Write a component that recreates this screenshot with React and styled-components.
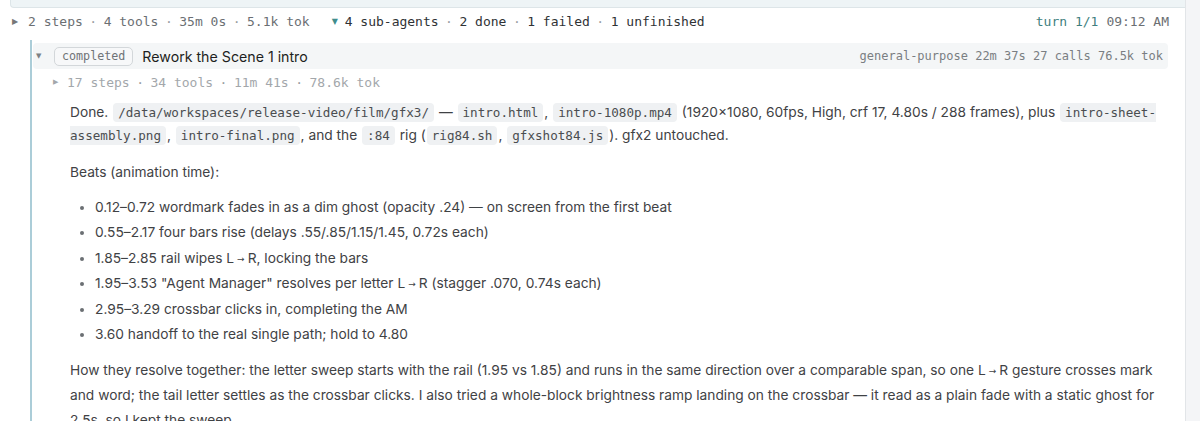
import React from "react";
import styled, { createGlobalStyle } from "styled-components";

const Global = createGlobalStyle`
  html, body { margin: 0; padding: 0; background: #ffffff; }
  body { font-family: Inter, "Noto Sans", sans-serif; }
  * { box-sizing: border-box; }
`;

const MONO = `"DejaVu Sans Mono", "Liberation Mono", monospace`;
const SANS = `Inter, "Noto Sans", sans-serif`;

const Page = styled.div`
  display: flex;
  width: 1200px;
  height: 421px;
  overflow: hidden;
`;

const Main = styled.div`
  flex: 1;
  min-width: 0;
  display: flex;
  flex-direction: column;
  & > * { flex: none; }
`;

const Sidebar = styled.div`
  width: 15px;
  flex: none;
  background: #f4f5f7;
  border-left: 1px solid #e2e5e8;
`;

const TopStrip = styled.div`
  height: 8px;
  margin-left: 10px;
  background: #eef4f6;
  border-bottom: 1px solid #dde5e8;
  border-left: 1px solid #dde5e8;
  border-bottom-left-radius: 4px;
`;

const MetaRow = styled.div`
  display: flex;
  align-items: center;
  height: 26px;
  padding: 0 16px 0 12px;
  font-family: ${MONO};
  font-size: 13px;
  color: #6b6f73;
  white-space: nowrap;
`;

const Caret = styled.span`
  display: inline-block;
  width: ${(p) => p.$w || 16}px;
  font-size: ${(p) => p.$size || 8}px;
  color: ${(p) => p.$color || "#777"};
  font-family: "DejaVu Sans", sans-serif;
`;

const Sep = styled.span`
  margin: 0 6.5px;
  color: #9a9ea2;
`;

const Group = styled.span`
  display: inline-flex;
  align-items: center;
  margin-left: ${(p) => p.$ml || 0}px;
  color: ${(p) => p.$color || "inherit"};
`;

const Spacer = styled.span`
  flex: 1;
`;

const Teal = styled.span`
  color: #3f7f80;
  margin-right: 8px;
`;

const Thread = styled.div`
  margin-left: 30px;
  margin-top: 6px;
  border-left: 2px solid #abcdd8;
  padding: 3px 17px 0 1px;
  flex: 1 0 auto !important;
`;

const SubHeader = styled.div`
  display: flex;
  align-items: center;
  height: 26px;
  background: #f4f6f7;
  border-radius: 4px;
  padding: 0 5px 0 3px;
`;

const Badge = styled.span`
  font-family: ${MONO};
  font-size: 11.7px;
  color: #6f7377;
  border: 1px solid #d3d7da;
  border-radius: 5px;
  padding: 1px 7px;
  line-height: 15px;
  background: #f7f8f9;
`;

const Title = styled.span`
  margin-left: 9px;
  font-family: ${SANS};
  font-size: 14.2px;
  color: #1e1f21;
`;

const SubMeta = styled.span`
  font-family: ${MONO};
  font-size: 12px;
  color: #7a7e82;
  white-space: nowrap;
`;

const StepsRow = styled.div`
  display: flex;
  align-items: center;
  height: 26px;
  padding-left: 20px;
  font-family: ${MONO};
  font-size: 13px;
  color: #a3a7ab;
  white-space: nowrap;
`;

const Body = styled.div`
  padding: 6px 0 0 37px;
  font-family: ${SANS};
  font-size: 13.75px;
  color: #3f4245;
`;

const Para = styled.p`
  margin: 0 0 ${(p) => p.$mb || 12}px 0;
  line-height: ${(p) => p.$lh || 24.6}px;
`;

const Code = styled.code`
  font-family: ${MONO};
  font-size: 12.6px;
  color: #4a4d50;
  background: #eff1f3;
  border-radius: 4px;
  padding: 2px 5px;
  margin: 0 1px;
`;

const List = styled.ul`
  margin: 0 0 11px 0;
  padding-left: 25px;
  line-height: 25.4px;
  li::marker { color: #6b6f73; }
`;

const Arrow = styled.span`
  font-family: "DejaVu Sans", sans-serif;
  font-size: 9px;
  line-height: 1;
  margin: 0 3px;
  position: relative;
  top: -1px;
`;

const LR = () => (
  <>
    L<Arrow>→</Arrow>R
  </>
);

const beats = [
  <>0.12–0.72 wordmark fades in as a dim ghost (opacity .24) — on screen from the first beat</>,
  <>0.55–2.17 four bars rise (delays .55/.85/1.15/1.45, 0.72s each)</>,
  <>1.85–2.85 rail wipes <LR />, locking the bars</>,
  <>1.95–3.53 "Agent Manager" resolves per letter <LR /> (stagger .070, 0.74s each)</>,
  <>2.95–3.29 crossbar clicks in, completing the AM</>,
  <>3.60 handoff to the real single path; hold to 4.80</>,
];

export default function App() {
  return (
    <>
      <Global />
      <Page>
        <Main>
          <TopStrip />
          <MetaRow>
            <Caret $size={8}>▶</Caret>
            <Group>
              2 steps<Sep>·</Sep>4 tools<Sep>·</Sep>35m 0s<Sep>·</Sep>5.1k tok
            </Group>
            <Group $ml={22} $color="#2f3235">
              <Caret $size={8} $color="#3f8d8d" $w={13}>▼</Caret>
              4 sub-agents<Sep>·</Sep>2 done<Sep>·</Sep>1 failed<Sep>·</Sep>1 unfinished
            </Group>
            <Spacer />
            <Teal>turn 1/1</Teal>
            <span>09:12 AM</span>
          </MetaRow>
          <Thread>
            <SubHeader>
              <Caret $size={7} $color="#7d8185" $w={18}>▼</Caret>
              <Badge>completed</Badge>
              <Title>Rework the Scene 1 intro</Title>
              <Spacer />
              <SubMeta>general-purpose 22m 37s 27 calls 76.5k tok</SubMeta>
            </SubHeader>
            <StepsRow>
              <Caret $size={7} $color="#a3a7ab" $w={14}>▶</Caret>
              17 steps<Sep>·</Sep>34 tools<Sep>·</Sep>11m 41s<Sep>·</Sep>78.6k tok
            </StepsRow>
            <Body>
              <Para $lh={22} $mb={13}>
                Done. <Code>/data/workspaces/release-video/film/gfx3/</Code> — <Code>intro.html</Code>,{" "}
                <Code>intro-1080p.mp4</Code> (1920x1080, 60fps, High, crf 17, 4.80s / 288 frames), plus{" "}
                <Code>intro-sheet-assembly.png</Code>, <Code>intro-final.png</Code>, and the <Code>:84</Code> rig (
                <Code>rig84.sh</Code>, <Code>gfxshot84.js</Code>). gfx2 untouched.
              </Para>
              <Para $mb={10} $lh={25}>Beats (animation time):</Para>
              <List>
                {beats.map((b, i) => (
                  <li key={i}>{b}</li>
                ))}
              </List>
              <Para>
                How they resolve together: the letter sweep starts with the rail (1.95 vs 1.85) and runs in the same
                direction over a comparable span, so one <LR /> gesture crosses mark and word; the tail letter settles as
                the crossbar clicks. I also tried a whole-block brightness ramp landing on the crossbar — it read as a
                plain fade with a static ghost for 2.5s, so I kept the sweep.
              </Para>
            </Body>
          </Thread>
        </Main>
        <Sidebar />
      </Page>
    </>
  );
}
